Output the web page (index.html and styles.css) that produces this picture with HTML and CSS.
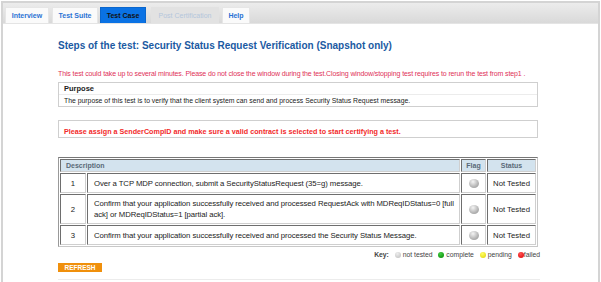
FILE: index.html
```html
<!DOCTYPE html>
<html lang="en">
<head>
    <meta charset="UTF-8">
    <title>Test Case</title>
    <link rel="stylesheet" href="styles.css">
</head>
<body>
<div class="frame">
    <div class="tab-bar">
        <span class="tab tab-interview">Interview</span>
        <span class="tab tab-suite">Test Suite</span>
        <span class="tab tab-case active">Test Case</span>
        <span class="tab tab-post disabled">Post Certification</span>
        <span class="tab tab-help">Help</span>
    </div>

    <div class="content">
        <h1 class="title">Steps of the test: Security Status Request Verification (Snapshot only)</h1>

        <p class="warning">This test could take up to several minutes. Please do not close the window during the test.Closing window/stopping test requires to rerun the test from step1 .</p>

        <div class="box purpose">
            <div class="purpose-head">Purpose</div>
            <div class="purpose-body">The purpose of this test is to verify that the client system can send and process Security Status Request message.</div>
        </div>

        <div class="box notice">Please assign a SenderCompID and make sure a valid contract is selected to start certifying a test.</div>

        <table class="steps">
            <tr class="head">
                <th colspan="2" class="th-desc">Description</th>
                <th class="col-flag">Flag</th>
                <th class="col-status">Status</th>
            </tr>
            <tr class="row-short">
                <td class="col-num">1</td>
                <td class="col-desc">Over a TCP MDP connection, submit a SecurityStatusRequest (35=g) message.</td>
                <td class="col-flag"><span class="dot dot-big"></span></td>
                <td class="col-status">Not Tested</td>
            </tr>
            <tr class="row-tall">
                <td class="col-num">2</td>
                <td class="col-desc">Confirm that your application successfully received and processed RequestAck with MDReqIDStatus=0 [full ack] or MDReqIDStatus=1 [partial ack].</td>
                <td class="col-flag"><span class="dot dot-big"></span></td>
                <td class="col-status">Not Tested</td>
            </tr>
            <tr class="row-short">
                <td class="col-num">3</td>
                <td class="col-desc">Confirm that your application successfully received and processed the Security Status Message.</td>
                <td class="col-flag"><span class="dot dot-big"></span></td>
                <td class="col-status">Not Tested</td>
            </tr>
        </table>

        <div class="legend">
            <b>Key:</b>
            <span class="dot dot-gray"></span> not tested
            <span class="dot dot-green"></span> complete
            <span class="dot dot-yellow"></span> pending
            <span class="dot dot-red"></span>failed
        </div>

        <button class="refresh">REFRESH</button>
        <div class="rule"></div>
    </div>
</div>
</body>
</html>
```

FILE: styles.css
```css
body {
    margin: 0;
    font-family: "Liberation Sans", Arial, sans-serif;
    background: #fff;
}

.frame {
    margin: 1px 1px 0 1px;
    border: 2px solid #d4d4d4;
    border-bottom: none;
    height: 281px;
    box-sizing: border-box;
    overflow: hidden;
}

.tab-bar {
    display: flex;
    align-items: flex-end;
    height: 20px;
    padding-left: 2px;
    background: linear-gradient(#ececec, #d9d9d9);
    border-bottom: 1px solid #e4e4e4;
}

.tab {
    display: flex;
    align-items: center;
    justify-content: center;
    height: 16px;
    margin-right: 3px;
    background: #fafafa;
    color: #2a72d4;
    font-size: 7px;
    font-weight: bold;
    box-sizing: border-box;
    border: 1px solid #e6e6e6;
    border-bottom: none;
}

.tab-interview { width: 44px; }
.tab-suite { width: 46px; margin-right: 2px; }
.tab-case { width: 46px; margin-right: 5px; }
.tab-post { width: 68px; }
.tab-help { width: 28px; }

.tab.active {
    background: #0a72e4;
    border-color: #0a66cc;
    color: #111;
}

.tab.disabled {
    background: #e2e2e2;
    border-color: #e2e2e2;
    color: #b4c6dc;
    font-weight: normal;
}

.content {
    padding-left: 55px;
    width: 482px;
}

.title {
    margin: 15px 0 0 0;
    font-size: 10px;
    color: #1b5aa2;
    line-height: 14px;
}

.warning {
    margin: 16px 0 0 0;
    font-size: 7px;
    letter-spacing: -0.12px;
    line-height: 10px;
    color: #e03058;
    white-space: nowrap;
}

.box {
    border: 1px solid #cfcfcf;
    box-sizing: border-box;
    width: 480px;
}

.purpose {
    margin-top: 3px;
    height: 25px;
    font-size: 6.85px;
    color: #222;
}

.purpose-head {
    font-weight: bold;
    font-size: 7.5px;
    height: 11px;
    line-height: 11px;
    padding-left: 5px;
    border-bottom: 1px solid #ececec;
}

.purpose-body {
    line-height: 12px;
    padding-left: 5px;
}

.notice {
    margin-top: 13px;
    height: 18px;
    padding: 6px 0 0 5px;
    font-size: 7.2px;
    font-weight: bold;
    color: #f22a2a;
}

.steps {
    margin-top: 19px;
    width: 480px;
    border-collapse: separate;
    border-spacing: 1px;
    border: 1px solid #c8c8c8;
    border-top-color: #777;
    border-left-color: #999;
    font-size: 7.75px;
    color: #222;
}

.steps th,
.steps td {
    border: 1px solid;
    border-color: #6e6e6e #cfcfcf #cfcfcf #6e6e6e;
    padding: 0;
}

.steps th {
    background: #d3e3ee;
    color: #5a6a78;
    font-size: 7px;
    font-weight: bold;
    height: 11px;
}

.th-desc {
    text-align: left;
    padding-left: 5px !important;
}

.row-short td { height: 18px; }
.row-tall td { height: 28px; }

.col-num {
    width: 24px;
    text-align: center;
}

.col-desc {
    padding: 0 0 0 6px !important;
    line-height: 11px;
    letter-spacing: -0.08px;
}

.col-flag {
    width: 23px;
    text-align: center;
}

.col-status {
    width: 47px;
    text-align: center;
}

.dot {
    display: inline-block;
    border-radius: 50%;
    vertical-align: middle;
}

.dot-big {
    width: 10px;
    height: 9px;
    background: radial-gradient(circle at 40% 30%, #f4f4f4, #b4b4b4 60%, #8e8e8e);
}

.legend {
    margin-top: 4px;
    text-align: right;
    font-size: 6.8px;
    color: #444;
    line-height: 8px;
}

.legend .dot {
    width: 6px;
    height: 6px;
    margin-left: 4px;
}

.dot-gray { background: radial-gradient(circle at 40% 30%, #eee, #bbb); }
.dot-green { background: radial-gradient(circle at 40% 30%, #4c4, #080); }
.dot-yellow { background: radial-gradient(circle at 40% 30%, #ffff66, #e0d000); }
.dot-red { background: radial-gradient(circle at 40% 30%, #ff5555, #d00); }

.refresh {
    display: block;
    margin-top: 4px;
    width: 44px;
    height: 9px;
    padding: 0;
    border: none;
    background: #f0900c;
    color: #fff;
    font-family: "Liberation Sans", Arial, sans-serif;
    font-size: 6.5px;
    font-weight: bold;
    line-height: 9px;
}

.rule {
    margin-top: 7px;
    width: 482px;
    border-top: 1px solid #ececec;
}
```
